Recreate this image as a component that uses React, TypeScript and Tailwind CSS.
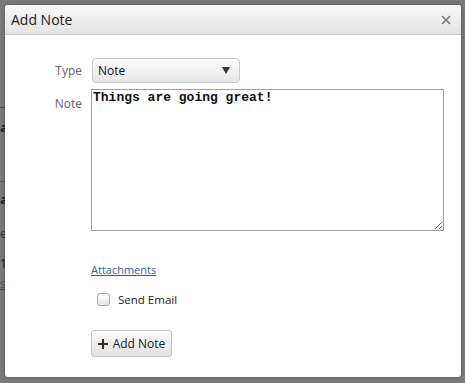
import { useState } from 'react';

const sans = { fontFamily: '"Open Sans", "Liberation Sans", sans-serif' };

export default function App() {
  const [note, setNote] = useState('Things are going great!');
  const [sendEmail, setSendEmail] = useState(false);

  return (
    <div className="relative h-[383px] w-[465px] overflow-hidden bg-[#7b7b7b]" style={sans}>
      {/* dimmed page behind the dialog */}
      <div className="absolute left-0 top-[107px] h-px w-[6px] bg-[#555]" />
      <div className="absolute left-0 top-[118px] text-[13px] font-bold text-[#222]">a</div>
      <div className="absolute left-0 top-[181px] h-px w-[6px] bg-[#5a5a5a]" />
      <div className="absolute left-0 top-[190px] text-[13px] font-bold text-[#222]">a</div>
      <div className="absolute left-0 top-[225px] text-[12px] text-[#333]">e</div>
      <div className="absolute left-0 top-[255px] text-[12px] text-[#222]">1</div>
      <div className="absolute left-0 top-[275px] text-[12px] text-[#2a5f8a] underline">s</div>

      {/* dialog */}
      <div className="absolute left-[5px] top-[5px] flex h-[372px] w-[456px] flex-col overflow-hidden rounded-[3px] bg-white shadow-[0_0_4px_rgba(0,0,0,0.35)]">
        <div className="flex h-[30px] items-center justify-between border-b border-[#c4c4c4] bg-gradient-to-b from-[#f8f8f8] to-[#e4e4e4] pl-[6px] pr-[8px]">
          <span className="text-[14px] text-[#1a1a1a]">Add Note</span>
          <button className="flex h-[14px] w-[14px] items-center justify-center text-[#777]">
            <svg width="10" height="10" viewBox="0 0 10 10">
              <path d="M1 1L9 9M9 1L1 9" stroke="#7a7a7a" strokeWidth="1.6" />
            </svg>
          </button>
        </div>

        <div className="flex flex-col pl-[31px] pt-[23px]">
          <div className="flex items-center">
            <label className="w-[46px] text-right text-[12px] text-[#666]">Type</label>
            <div className="ml-[10px] flex h-[25px] w-[148px] items-center justify-between rounded-[4px] border border-[#c8c8c8] bg-gradient-to-b from-[#fdfdfd] to-[#e6e6e6] pl-[5px] pr-[9px]">
              <span className="text-[12px] text-[#111]">Note</span>
              <svg width="8" height="7" viewBox="0 0 8 7">
                <path d="M0 0H8L4 7Z" fill="#333" />
              </svg>
            </div>
          </div>

          <div className="mt-[6px] flex items-start">
            <label className="mt-[6px] w-[46px] text-right text-[12px] text-[#666]">Note</label>
            <textarea
              value={note}
              onChange={(e) => setNote(e.target.value)}
              className="ml-[9px] h-[142px] w-[353px] resize border border-[#a0a0a0] px-[1px] py-0 text-[13px] font-bold leading-[16px] text-[#111] outline-none"
              style={{ fontFamily: '"Liberation Mono", "Courier New", monospace' }}
            />
          </div>

          <div className="ml-[55px] mt-[25px]">
            <a href="#" className="text-[11px] text-[#1f64a0] underline">Attachments</a>
          </div>

          <label className="ml-[61px] mt-[11px] flex items-center gap-[8px]">
            <input
              type="checkbox"
              checked={sendEmail}
              onChange={(e) => setSendEmail(e.target.checked)}
              className="h-[13px] w-[13px] appearance-none rounded-[3px] border border-[#a8a8a8] bg-gradient-to-b from-white to-[#e8e8e8]"
            />
            <span className="text-[11.5px] text-[#222]">Send Email</span>
          </label>

          <div className="ml-[55px] mt-[22px]">
            <button className="flex h-[27px] w-[81px] items-center justify-center gap-[5px] rounded-[3px] border border-[#c4c4c4] bg-gradient-to-b from-[#fafafa] to-[#e2e2e2] text-[12px] text-[#222]">
              <svg width="10" height="10" viewBox="0 0 10 10">
                <path d="M5 0V10M0 5H10" stroke="#3a2a22" strokeWidth="2" />
              </svg>
              Add Note
            </button>
          </div>
        </div>
      </div>
    </div>
  );
}
